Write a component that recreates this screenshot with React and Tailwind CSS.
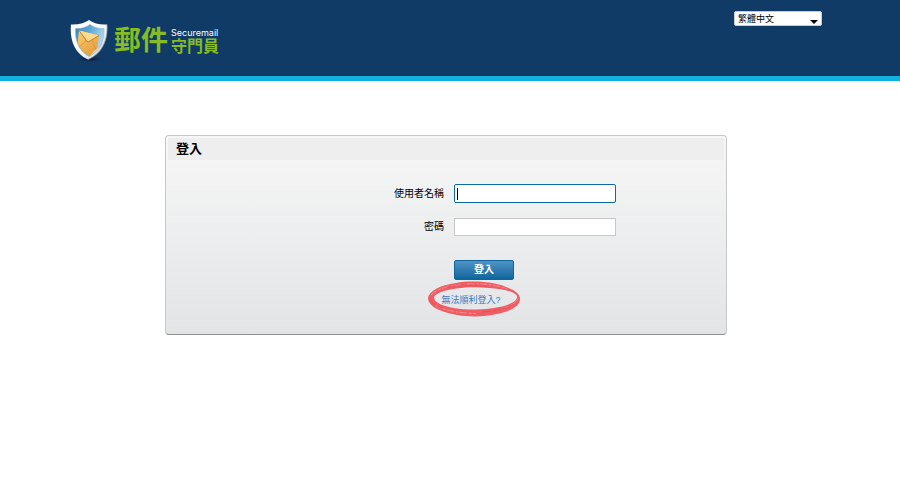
import React, { useState } from 'react';

const languages = ['繁體中文', '简体中文', 'English'];

const ShieldLogo = () => (
  <svg viewBox="0 0 40 42" className="w-10 h-[42px] shrink-0" aria-hidden="true">
    <defs>
      <linearGradient id="rim" x1="0" y1="0" x2="1" y2="1">
        <stop offset="0" stopColor="#ffffff" />
        <stop offset="0.6" stopColor="#f6f7f7" />
        <stop offset="1" stopColor="#b9bfc6" />
      </linearGradient>
      <linearGradient id="glass" x1="0" y1="0" x2="1" y2="0.4">
        <stop offset="0" stopColor="#2a78b2" />
        <stop offset="0.5" stopColor="#5ba6d4" />
        <stop offset="1" stopColor="#d3e9f6" />
      </linearGradient>
      <linearGradient id="envelope" x1="0" y1="0" x2="0.6" y2="1">
        <stop offset="0" stopColor="#fbd27c" />
        <stop offset="0.5" stopColor="#f2b654" />
        <stop offset="1" stopColor="#e3a040" />
      </linearGradient>
      <radialGradient id="ground">
        <stop offset="0" stopColor="#04172e" stopOpacity="0.8" />
        <stop offset="1" stopColor="#04172e" stopOpacity="0" />
      </radialGradient>
      <clipPath id="inner">
        <path d="M20 4.500C16 7.500 11 9 5.500 8.500C5 20 8 30 19 36.500C31 30 34.500 20 34 8.500C29 9 24 7.500 20 4.500Z" />
      </clipPath>
    </defs>
    <ellipse cx="20" cy="39" rx="13" ry="3" fill="url(#ground)" />
    <path d="M19 0C14 3.500 7 5 1 4.500C-0.500 19 4 33 18 39.500C33 33 38 19 37 4.500C30 5 24 3.500 19 0Z" fill="url(#rim)" />
    <path d="M37 4.500C38 19 33 33 18 39.500" fill="none" stroke="#8e99a6" strokeWidth="0.8" />
    <g clipPath="url(#inner)">
      <rect width="40" height="42" fill="url(#glass)" />
      <path d="M9 10.500L29 15.500L26.500 33L19 36L7 28Z" fill="url(#envelope)" />
      <path d="M9 10.500L29 15.500L18.500 22Z" fill="#fcd98c" />
      <path d="M9 10.500L17 21.500Q18.500 22.500 20 21L29 15.500" fill="none" stroke="#b8772a" strokeWidth="0.9" />
      <path d="M16 21L8 28M22 20.500L26.500 31" fill="none" stroke="#c9893a" strokeWidth="0.6" />
      <path d="M19 37L24 31L34 24V37Z" fill="#eef6fb" opacity="0.75" />
    </g>
    <path d="M20 4.500C16 7.500 11 9 5.500 8.500C5 20 8 30 19 36.500C31 30 34.500 20 34 8.500C29 9 24 7.500 20 4.500Z" fill="none" stroke="#8fb4cd" strokeWidth="0.6" />
  </svg>
);

// Hand drawn red marker ring around the help link
const MarkerRing = () => (
  <svg viewBox="0 0 94 38" className="absolute -left-3.5 -top-3 w-[94px] h-[38px] pointer-events-none" aria-hidden="true">
    <path
      fillRule="evenodd"
      fill="#ef5e64"
      d="M1 18C2 11 13 5 29 3C42 0.500 65 1 79 7C88 10 93 14 93 19C93 26 84 31 70 34C53 38 30 37 15 31C6 28 1 23 1 18ZM7 18C8 23 16 26 27 28C45 31 65 29 77 26C86 23 91 20 90 16C87 11 75 9 62 8C45 6 27 8 17 11C11 13 7 15 7 18Z"
    />
    <path d="M4 15C9 9 21 6 34 5M8 25C18 31 33 33 49 33.500M74 29C85 26 91 21 91 17M40 4C56 3 70 5 80 9" fill="none" stroke="#f48a8e" strokeWidth="1" strokeDasharray="7 2 3 1" />
    <path d="M3 19C4 23 9 26 16 28M55 32C68 31 78 29 85 25M20 7.500C32 5.500 45 5 60 6.500" fill="none" stroke="#ea4f57" strokeWidth="1" strokeDasharray="9 2 4 1" />
  </svg>
);

const App = () => {
  const [language, setLanguage] = useState(languages[0]);
  const [username, setUsername] = useState('');
  const [password, setPassword] = useState('');

  return (
    <div className="min-h-screen bg-white text-black font-['Liberation_Sans','Noto_Sans_CJK_TC',sans-serif]">
      {/* Header */}
      <header className="bg-[#113b67] border-b-5 border-[#10b2de] pr-2">
        <div className="max-w-[752px] h-[76px] mx-auto flex items-start justify-between">
          <div className="flex items-center pt-5">
            <ShieldLogo />
            <h1 className="flex items-center ml-1 gap-[3px] text-[#86bc25] font-bold">
              <span className="text-[27px] leading-8">郵件</span>
              <span className="flex flex-col gap-px">
                <span className="text-white text-[9px] leading-[10px] font-normal font-['Inter',sans-serif]">Securemail</span>
                <span className="text-[16px] leading-4">守門員</span>
              </span>
            </h1>
          </div>
          <div className="relative mt-[11px]">
            <select
              aria-label="語言"
              value={language}
              onChange={(e) => setLanguage(e.target.value)}
              className="block appearance-none w-[88px] h-[15px] pl-[3px] bg-white border border-[#c5ccd4] rounded-xs text-[9px] leading-3"
            >
              {languages.map((item) => (
                <option key={item}>{item}</option>
              ))}
            </select>
            <svg viewBox="0 0 8 4" className="absolute right-1 bottom-0.5 w-2 h-1 pointer-events-none" aria-hidden="true">
              <path d="M0 0H8L4 4Z" fill="#000" />
            </svg>
          </div>
        </div>
      </header>

      {/* Login panel */}
      <main className="pt-[54px] pr-2">
        <section className="max-w-[562px] mx-auto p-0.5 pb-[26px] rounded-sm border border-[#c8c8c8] border-b-[#8f9092] bg-linear-to-b from-[#f6f7f6] to-[#e3e4e6]">
          <h2 className="px-2 bg-[#eeeeee] text-[13px] leading-[22px] font-bold">登入</h2>
          <form className="pl-1.5 pt-6" onSubmit={(e) => e.preventDefault()}>
            <div className="grid grid-cols-2 gap-x-2.5 gap-y-[15px] items-center text-[10px] leading-3">
              <label htmlFor="username" className="text-right">使用者名稱</label>
              <div className="relative">
                <input
                  id="username"
                  value={username}
                  onChange={(e) => setUsername(e.target.value)}
                  className="peer block w-[162px] h-[19px] px-1 bg-white border border-[#0b6aa2] rounded-xs outline-none"
                />
                {!username && <span className="absolute left-[3px] top-1 w-px h-3 bg-black pointer-events-none peer-focus:hidden" />}
              </div>
              <label htmlFor="password" className="text-right">密碼</label>
              <input
                id="password"
                type="password"
                value={password}
                onChange={(e) => setPassword(e.target.value)}
                className="block w-[162px] h-[18px] px-1 bg-white border border-[#c8c8c8] outline-none"
              />
            </div>
            <div className="grid grid-cols-2 gap-x-2.5 mt-6">
              <button
                type="submit"
                className="col-start-2 w-[60px] h-5 rounded-xs border border-[#0f669e] bg-linear-to-b from-[#4f93c6] to-[#07669c] text-white text-[10px] leading-4 font-bold cursor-pointer"
              >
                登入
              </button>
            </div>
            <div className="flex justify-center mt-3 pl-11">
              <a href="#help" className="relative text-[#3a78c3] text-[9px] leading-4">
                無法順利登入?
                <MarkerRing />
              </a>
            </div>
          </form>
        </section>
      </main>
    </div>
  );
};

export default App;
